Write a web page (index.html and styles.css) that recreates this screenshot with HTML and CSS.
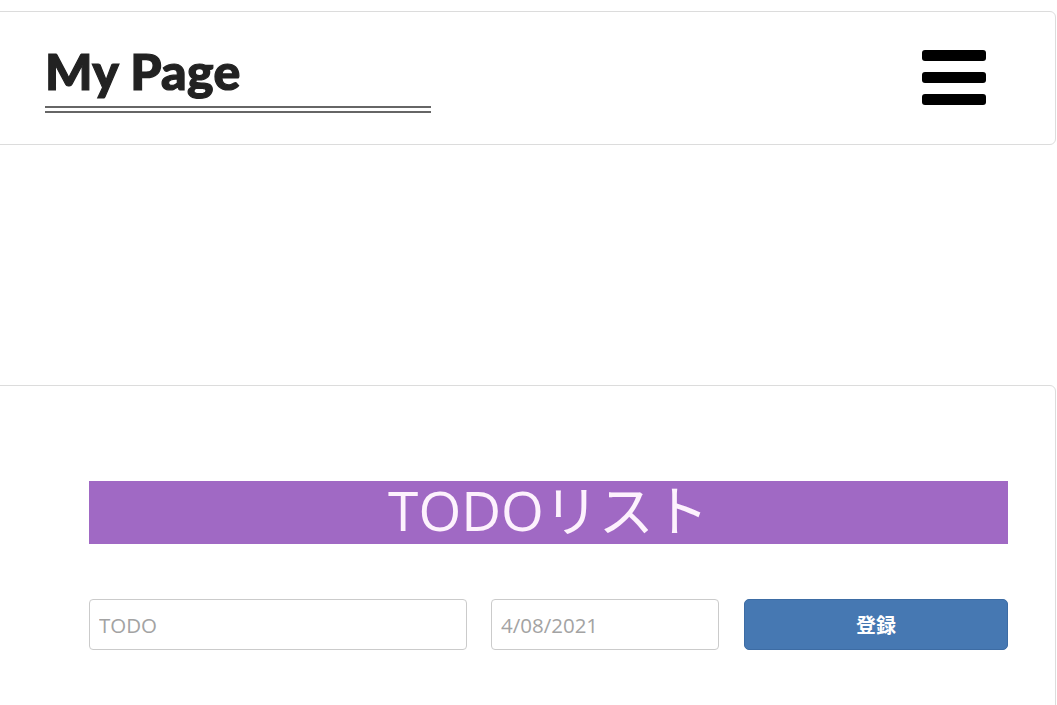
FILE: index.html
```html
<!DOCTYPE html>
<html lang="ja">
<head>
<meta charset="utf-8">
<title>My Page</title>
<link rel="stylesheet" href="styles.css">
</head>
<body>
<header class="site-header">
  <h1 class="site-title">My Page</h1>
  <button class="menu-btn" aria-label="menu">
    <span class="bar"></span><span class="bar"></span><span class="bar"></span>
  </button>
</header>
<main class="todo-card">
  <h2 class="todo-banner">TODOリスト</h2>
  <form class="todo-form">
    <input class="field" type="text" placeholder="TODO">
    <input class="field" type="text" placeholder="4/08/2021">
    <button class="submit-btn" type="button">登録</button>
  </form>
</main>
</body>
</html>
```
FILE: styles.css
```css
html, body {
  margin: 0;
  padding: 0;
  background: #fff;
  overflow: hidden;
}
body {
  padding-top: 11px;
  font-family: "Open Sans", "Noto Sans CJK JP", sans-serif;
}
.site-header {
  box-sizing: border-box;
  height: 134px;
  margin: 0 1px 0 -10px;
  border: 1px solid #dcdcdc;
  border-radius: 6px;
  display: flex;
  align-items: center;
  justify-content: space-between;
  padding: 0 69px 0 54px;
}
.site-title {
  align-self: flex-start;
  margin: 34px 0 0;
  width: 386px;
  font-family: "Lato", sans-serif;
  font-weight: 900;
  font-size: 50px;
  line-height: 50px;
  color: #222;
  -webkit-text-stroke: 1.2px #222;
  letter-spacing: 0.3px;
  border-bottom: 7px double #666;
  padding-bottom: 10px;
}
.menu-btn {
  background: none;
  border: 0;
  padding: 0;
  width: 64px;
  display: flex;
  flex-direction: column;
  gap: 11px;
  cursor: pointer;
  margin-top: -1px;
}
.bar {
  display: block;
  height: 11px;
  width: 64px;
  background: #000;
  border-radius: 3px;
}
.todo-card {
  box-sizing: border-box;
  margin: 240px 1px 0 -10px;
  height: 400px;
  border: 1px solid #dcdcdc;
  border-radius: 6px;
  padding: 95px 47px 0 98px;
}
.todo-banner {
  margin: 0;
  height: 63px;
  background: #a069c4;
  color: #fdf2fd;
  text-align: center;
  font-weight: 400;
  font-size: 55px;
  line-height: 58px;
  font-family: "Open Sans", "Noto Sans CJK JP", sans-serif;
}
.todo-form {
  margin-top: 55px;
  display: grid;
  grid-template-columns: 378px 228px 265px;
  column-gap: 24px;
}
.todo-form > :nth-child(3) {
  margin-left: 1px;
}
.field {
  box-sizing: border-box;
  height: 51px;
  border: 1px solid #cbcbcb;
  border-radius: 4px;
  padding: 0 9px;
  font-family: "Open Sans", sans-serif;
  font-size: 20.5px;
  color: #333;
  outline: none;
}
.field::placeholder {
  color: #a3a3a3;
}
.submit-btn {
  box-sizing: border-box;
  height: 51px;
  border: 1px solid #3d6ca4;
  border-radius: 5px;
  background: #4678b2;
  color: #fff;
  font-family: "Noto Sans CJK JP", sans-serif;
  font-weight: 700;
  font-size: 20px;
  cursor: pointer;
}
```
